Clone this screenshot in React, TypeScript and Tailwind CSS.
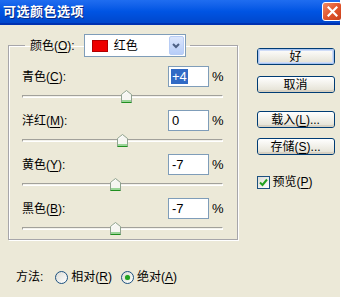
const rows = [
  { label: "青色", key: "C", value: "+4", pos: 4, selected: true },
  { label: "洋红", key: "M", value: "0", pos: 0, selected: false },
  { label: "黄色", key: "Y", value: "-7", pos: -7, selected: false },
  { label: "黑色", key: "B", value: "-7", pos: -7, selected: false },
];

const ui = { fontFamily: '"Liberation Sans", "Noto Sans CJK SC", sans-serif' };

function Mnemonic({ text, k, tail = "" }: { text: string; k: string; tail?: string }) {
  return (
    <span className="whitespace-nowrap">
      {text}(<span className="underline underline-offset-2">{k}</span>){tail}
    </span>
  );
}

function Thumb() {
  return (
    <svg width="11" height="13" viewBox="0 0 11 13">
      <path d="M0.5 4.5 L5.5 0.5 L10.5 4.5 V12.5 H0.5 Z" fill="#f6f6f2" stroke="#8fa38f" />
      <path d="M1 11 H10" stroke="#3cb43c" strokeWidth="1" />
      <path d="M0.5 12.5 H10.5" stroke="#1f8f1f" strokeWidth="1" />
      <path d="M1.5 5 L5.5 1.8" stroke="#ffffff" />
    </svg>
  );
}

function Slider({ pos }: { pos: number }) {
  return (
    <div className="relative mt-[2px] h-[14px] w-[201px]">
      <div className="absolute left-0 right-0 top-[6px] h-[3px] border border-t-[#a2a19b] border-l-[#a2a19b] border-b-white border-r-white bg-[#f2f1ea]" />
      <div className="absolute top-[1px]" style={{ left: 100 + pos - 5 }}>
        <Thumb />
      </div>
    </div>
  );
}

function XpButton({ children, main = false }: { children: React.ReactNode; main?: boolean }) {
  return (
    <div className="h-[17px] w-[78px] rounded-[3px] border border-[#003c74] bg-gradient-to-b from-white to-[#e3e0d2]">
      <div
        className={
          "flex h-full items-center justify-center rounded-[2px] text-[12px] leading-none text-black " +
          (main ? "shadow-[inset_0_0_0_1px_#a8c4f0,inset_0_0_0_2px_#cfdcf7]" : "shadow-[inset_0_-2px_0_#d6d0c2]")
        }
      >
        {children}
      </div>
    </div>
  );
}

function Radio({ on }: { on: boolean }) {
  return (
    <span className="flex h-[13px] w-[13px] items-center justify-center rounded-full border border-[#1c5180] bg-gradient-to-br from-[#dcdcd5] to-white">
      {on && <span className="h-[5px] w-[5px] rounded-full bg-[#21a121] shadow-[0_0_1px_#6fd46f]" />}
    </span>
  );
}

export default function App() {
  return (
    <div className="min-h-screen bg-white" style={ui}>
      <div className="flex h-[297px] w-[340px] flex-col bg-[#ece9d8]">
        <div className="flex h-[25px] items-center justify-between border-b-2 border-[#0031b0] bg-gradient-to-b from-[#1f6df0] via-[#0054e3] to-[#0047cc] pl-[3px]">
          <span className="text-[13px] font-bold tracking-[0.5px] text-white [text-shadow:1px_1px_0_#0a2a80]">
            可选颜色选项
          </span>
          <div className="mr-[-2px] flex h-[19px] w-[20px] items-center justify-center rounded-[3px] border border-white bg-gradient-to-br from-[#f08a64] via-[#e2552c] to-[#c8401c]">
            <svg width="11" height="11" viewBox="0 0 11 11">
              <path d="M1.5 1.5 L9.5 9.5 M9.5 1.5 L1.5 9.5" stroke="white" strokeWidth="2.2" strokeLinecap="square" />
            </svg>
          </div>
        </div>

        <div className="flex pl-[8px] pt-[9px]">
          <fieldset className="w-[228px] border border-[#a7a6aa] px-[13px] pb-[4px] pt-[9px] shadow-[inset_1px_1px_0_#fff,1px_1px_0_#fff]">
            <legend className="ml-[3px] flex items-center pl-[5px] pr-[4px] text-[12px] text-black">
              <Mnemonic text="颜色" k="O" tail=":" />
              <div className="ml-[9px] flex h-[23px] w-[102px] items-center border border-[#7f9db9] bg-white pl-[7px]">
                <span className="h-[12px] w-[16px] border border-[#b00000] bg-[#ee0000]" />
                <span className="ml-[6px] flex-1 text-[12px]">红色</span>
                <span className="mr-[1px] flex h-[19px] w-[15px] items-center justify-center rounded-[2px] border border-[#b8cdf5] bg-gradient-to-b from-[#dbe6fc] to-[#b7cdf8]">
                  <svg width="8" height="6" viewBox="0 0 8 6">
                    <path d="M1 1 L4 4 L7 1" fill="none" stroke="#4d6185" strokeWidth="2" />
                  </svg>
                </span>
              </div>
            </legend>

            <div className="flex flex-col gap-[7px]">
              {rows.map((r) => (
                <div key={r.key}>
                  <div className="flex h-[21px] items-center text-[12px] text-black">
                    <span className="w-[146px]">
                      <Mnemonic text={r.label} k={r.key} tail=":" />
                    </span>
                    <div className="flex h-[21px] w-[41px] items-center border border-[#7f9db9] bg-white pl-[2px] text-[13px]">
                      {r.selected ? (
                        <span className="bg-[#316ac5] px-[1px] leading-[15px] text-white">{r.value}</span>
                      ) : (
                        <span className="px-[1px]">{r.value}</span>
                      )}
                    </div>
                    <span className="ml-[3px] text-[13px]">%</span>
                  </div>
                  <Slider pos={r.pos} />
                </div>
              ))}
            </div>
          </fieldset>

          <div className="ml-[19px] flex flex-col pt-[14px] text-[12px] text-black">
            <XpButton main>好</XpButton>
            <div className="mt-[11px]">
              <XpButton>取消</XpButton>
            </div>
            <div className="mt-[18px]">
              <XpButton>
                <Mnemonic text="载入" k="L" tail="..." />
              </XpButton>
            </div>
            <div className="mt-[10px]">
              <XpButton>
                <Mnemonic text="存储" k="S" tail="..." />
              </XpButton>
            </div>
            <div className="mt-[18px] flex items-center">
              <span className="flex h-[13px] w-[13px] items-center justify-center border border-[#1c5180] bg-gradient-to-br from-[#dcdcd5] to-white">
                <svg width="9" height="9" viewBox="0 0 9 9">
                  <path d="M1 4.5 L3.5 7 L8 1.5" fill="none" stroke="#21a121" strokeWidth="2" />
                </svg>
              </span>
              <span className="ml-[3px]">
                <Mnemonic text="预览" k="P" />
              </span>
            </div>
          </div>
        </div>

        <div className="mt-[28px] flex items-center pl-[16px] text-[12px] text-black">
          <span>方法:</span>
          <span className="ml-[12px]">
            <Radio on={false} />
          </span>
          <span className="ml-[3px]">
            <Mnemonic text="相对" k="R" />
          </span>
          <span className="ml-[9px]">
            <Radio on />
          </span>
          <span className="ml-[3px]">
            <Mnemonic text="绝对" k="A" />
          </span>
        </div>
      </div>
    </div>
  );
}
